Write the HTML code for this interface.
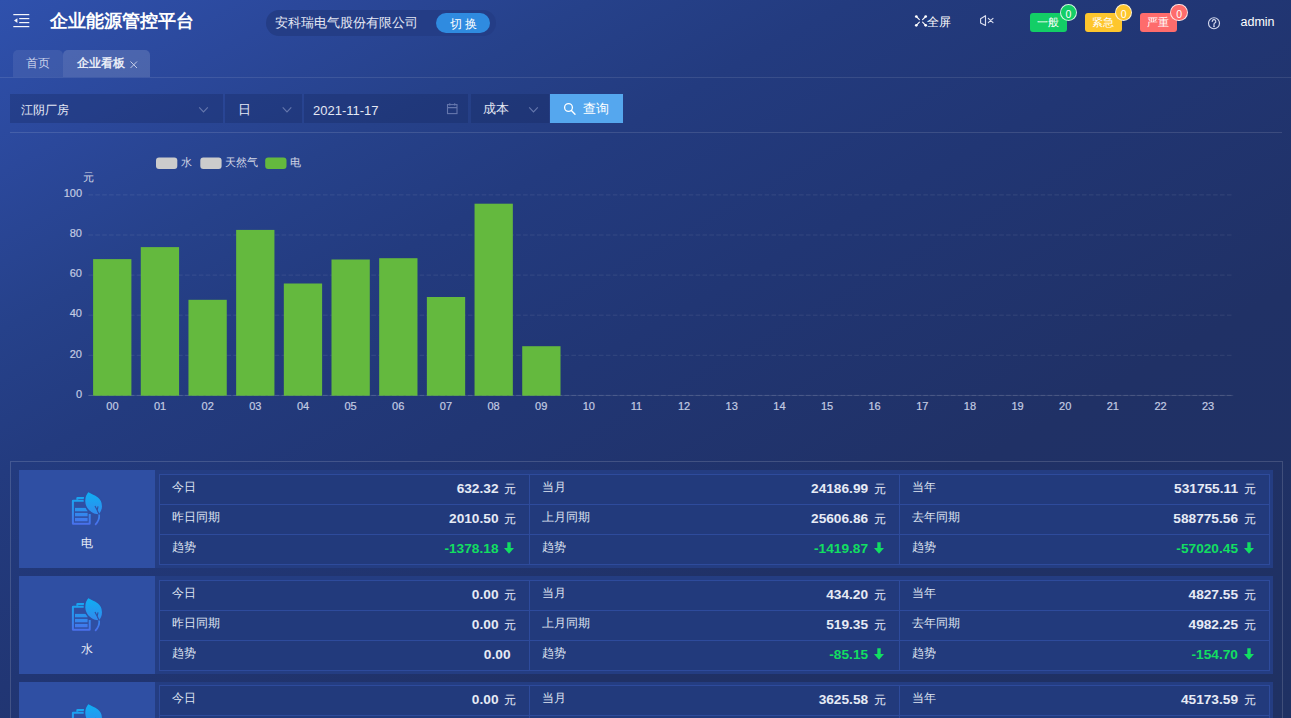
<!DOCTYPE html>
<html><head><meta charset="utf-8">
<style>
*{margin:0;padding:0;box-sizing:border-box}
html,body{width:1291px;height:718px;overflow:hidden}
body{font-family:"Liberation Sans",sans-serif;color:#fff;position:relative;
background:linear-gradient(to bottom right,#2f51ad 0%,#2b489b 12%,#26418a 23%,#233b7f 33%,#213674 48%,#203166 70%,#1f3163 100%)}
.a{position:absolute;white-space:nowrap}
.t{line-height:1}
.bdg{width:17.5px;height:17px;border-radius:9px;border:1px solid rgba(255,255,255,0.8);font-size:10.5px;line-height:19px;text-align:center;color:#fff}
.lbl{font-size:12px;line-height:12px;color:#e8ecf6}
.tbl{border:1px solid #2e4b9c;background:#223a7c}
.hl{height:1px;background:#2e4b9c}
.vl{width:1px;background:#2e4b9c}
.lab{font-size:12px;line-height:12px;color:#dfe4f1}
.val{font-size:13.7px;line-height:14px;color:#e6eaf5}
.val b{font-weight:bold}
.yuan{font-size:12px;margin-left:5.5px;font-weight:normal}
.g b{color:#12de62}
.arr{margin-left:5.5px;vertical-align:-1px}

</style></head><body>
<!-- header -->
<svg class="a" style="left:13px;top:13px" width="18" height="16" viewBox="0 0 18 16">
<g fill="#f4f6fb"><rect x="0.3" y="1" width="16" height="1.2"/><rect x="6.2" y="5" width="10.1" height="1.2"/><rect x="6.2" y="9" width="10.1" height="1.2"/><rect x="0.3" y="13" width="16" height="1.2"/><path d="M1 7.6 L4.4 5.3 L4.4 9.9Z"/></g></svg>
<div class="a t" style="left:50px;top:12px;font-size:18px;font-weight:bold">企业能源管控平台</div>
<div class="a" style="left:266px;top:10px;width:230px;height:26px;border-radius:13px;background:#243d86"></div>
<div class="a t" style="left:274.5px;top:16.5px;font-size:12.5px;color:#e4e8f4">安科瑞电气股份有限公司</div>
<div class="a" style="left:436px;top:13px;width:54px;height:20px;border-radius:10px;background:#2f8be0"></div>
<div class="a t" style="left:450px;top:17.5px;font-size:12px">切 换</div>

<svg class="a" style="left:912px;top:12px" width="18" height="18" viewBox="912 12 18 18" stroke="#fff" stroke-width="1.4" stroke-linecap="round" fill="#fff">
<path d="M916.3 16.5L919.4 19.6M925.7 16.5L922.6 19.6M916.3 25.3L919.4 22.2M925.7 25.3L922.6 22.2" stroke-width="1.1"/>
<circle cx="916.3" cy="16.5" r="1.35" stroke="none"/><circle cx="925.7" cy="16.5" r="1.35" stroke="none"/><circle cx="916.3" cy="25.3" r="1.35" stroke="none"/><circle cx="925.7" cy="25.3" r="1.35" stroke="none"/>
</svg>
<div class="a t" style="left:927px;top:16px;font-size:12px">全屏</div>
<svg class="a" style="left:976px;top:12px" width="22" height="18" viewBox="976 12 22 18" fill="none" stroke="#d9ddee" stroke-width="1.15" stroke-linejoin="round">
<path d="M980.6 18.7L985.5 15.7V25.4L980.6 23Z"/>
<path d="M988.3 18.4L993 22.7M993 18.4L988.3 22.7" stroke-linecap="round"/>
</svg>
<div class="a" style="left:1030px;top:13px;width:37px;height:19px;border-radius:3px;background:#13ce66"></div>
<div class="a" style="left:1085px;top:13px;width:37px;height:19px;border-radius:3px;background:#fec62d"></div>
<div class="a" style="left:1140px;top:13px;width:37px;height:19px;border-radius:3px;background:#fe6c6c"></div>
<div class="a t" style="left:1037px;top:16.5px;font-size:11px;width:22px;text-align:center">一般</div>
<div class="a t" style="left:1092px;top:16.5px;font-size:11px;width:22px;text-align:center">紧急</div>
<div class="a t" style="left:1147px;top:16.5px;font-size:11px;width:22px;text-align:center">严重</div>
<div class="a bdg" style="left:1059.6px;top:3.7px;background:#13ce66">0</div>
<div class="a bdg" style="left:1114.9px;top:3.7px;background:#fec62d">0</div>
<div class="a bdg" style="left:1170.3px;top:3.7px;background:#fe6c6c">0</div>
<svg class="a" style="left:1204px;top:13px" width="20" height="20" viewBox="1204 13 20 20" fill="none" stroke="#d3d8ec" stroke-width="1.15">
<circle cx="1214" cy="23.2" r="5.5"/>
<path d="M1212.2 21.4a1.8 1.8 0 1 1 2.6 1.6c-0.5 0.3-0.8 0.7-0.8 1.3v0.6" stroke-linecap="round"/>
<circle cx="1214" cy="26.3" r="0.35" fill="#d3d8ec"/>
</svg>
<div class="a t" style="left:1240.5px;top:16px;font-size:12.5px">admin</div>

<!-- tabs -->
<div class="a" style="left:0;top:77px;width:1291px;height:1px;background:rgba(255,255,255,0.1)"></div>
<div class="a" style="left:13px;top:50px;width:50px;height:27px;border-radius:5px 5px 0 0;background:rgba(255,255,255,0.08)"></div>
<div class="a" style="left:63px;top:50px;width:87px;height:27px;border-radius:5px 5px 0 0;background:rgba(255,255,255,0.15)"></div>
<div class="a t" style="left:26px;top:57px;font-size:12px;color:#c9d1ea">首页</div>
<div class="a t" style="left:77px;top:57px;font-size:12px;font-weight:bold;color:#e8ecf6">企业看板</div>
<svg class="a" style="left:128px;top:59px" width="12" height="12" viewBox="128 59 12 12" stroke="#c4cce6" stroke-width="1" fill="none"><path d="M130.5 61.5L137 68M137 61.5L130.5 68"/></svg>

<!-- filter -->
<div class="a" style="left:10px;top:94px;width:213px;height:29px;background:rgba(20,35,90,0.3)"></div>
<div class="a" style="left:225px;top:94px;width:77px;height:29px;background:rgba(20,35,90,0.3)"></div>
<div class="a" style="left:304px;top:94px;width:164px;height:29px;background:rgba(20,35,90,0.3)"></div>
<div class="a" style="left:471px;top:94px;width:78px;height:29px;background:rgba(20,35,90,0.3)"></div>
<div class="a" style="left:550px;top:94px;width:73px;height:29px;background:#55a7ee"></div>
<div class="a t" style="left:21px;top:103.5px;font-size:12px;color:#e4e8f4">江阴厂房</div>
<div class="a t" style="left:238px;top:103.5px;font-size:12.5px;color:#e4e8f4">日</div>
<div class="a t" style="left:313px;top:103.5px;font-size:13px;color:#e4e8f4">2021-11-17</div>
<div class="a t" style="left:483px;top:103px;font-size:12.5px;color:#e4e8f4">成本</div>
<div class="a t" style="left:583px;top:103px;font-size:12.5px;color:#fff">查询</div>
<svg class="a" style="left:0;top:95px" width="650" height="28" viewBox="0 95 650 28" fill="none" stroke="#6577ad" stroke-width="1.1">
<path d="M199.2 107.4L203.5 112L207.8 107.4"/>
<path d="M282.7 107.4L287 112L291.3 107.4"/>
<path d="M529.2 107.4L533.5 112L537.8 107.4"/>
<rect x="447.5" y="104.6" width="9.5" height="9" />
<path d="M447.5 107.6H457M449.8 103.2V105.5M454.7 103.2V105.5"/>
<circle cx="568.5" cy="107.5" r="3.9" stroke="#fff" stroke-width="1.3"/>
<path d="M571.4 110.6L575 114.2" stroke="#fff" stroke-width="1.4" stroke-linecap="round"/>
</svg>
<div class="a" style="left:10px;top:132px;width:1272px;height:1px;background:rgba(255,255,255,0.12)"></div>

<!-- chart -->
<svg class="a" style="left:0;top:140px" width="1291" height="290" viewBox="0 140 1291 290" font-family="Liberation Sans" font-size="11" fill="#c3cbe2" stroke="#c3cbe2" stroke-width="0.2">
<g stroke="none">
<rect x="156" y="157.5" width="21.3" height="11.5" rx="3" fill="#cccccc"/>
<rect x="200.3" y="157.5" width="21.3" height="11.5" rx="3" fill="#cccccc"/>
<rect x="265.2" y="157.5" width="21.3" height="11.5" rx="3" fill="#64b93e" stroke="none"/>
</g>
<text x="181" y="166" font-size="10.5" stroke="none" fill="#d4d8e6">水</text>
<text x="225.3" y="166" font-size="10.5" stroke="none" fill="#d4d8e6">天然气</text>
<text x="290.3" y="166" font-size="10.5" stroke="none" fill="#d4d8e6">电</text>
<text x="83" y="180.5" font-size="11" stroke="none" fill="#d4d8e6">元</text>
<line x1="88.4" y1="194.9" x2="1233.3" y2="194.9" stroke="rgba(255,255,255,0.09)" stroke-width="1" stroke-dasharray="4.6 2.3"/>
<line x1="88.4" y1="235.0" x2="1233.3" y2="235.0" stroke="rgba(255,255,255,0.09)" stroke-width="1" stroke-dasharray="4.6 2.3"/>
<line x1="88.4" y1="275.1" x2="1233.3" y2="275.1" stroke="rgba(255,255,255,0.09)" stroke-width="1" stroke-dasharray="4.6 2.3"/>
<line x1="88.4" y1="315.2" x2="1233.3" y2="315.2" stroke="rgba(255,255,255,0.09)" stroke-width="1" stroke-dasharray="4.6 2.3"/>
<line x1="88.4" y1="355.3" x2="1233.3" y2="355.3" stroke="rgba(255,255,255,0.09)" stroke-width="1" stroke-dasharray="4.6 2.3"/>
<line x1="88.4" y1="395.4" x2="1233.3" y2="395.4" stroke="rgba(255,255,255,0.1)" stroke-width="1"/>
<line x1="88.4" y1="395.4" x2="1233.3" y2="395.4" stroke="rgba(255,255,255,0.12)" stroke-width="1" stroke-dasharray="4.6 2.3"/>
<rect x="93.10" y="259.1" width="38.3" height="136.6" fill="#64b93e" stroke="none"/>
<rect x="140.78" y="247.1" width="38.3" height="148.6" fill="#64b93e" stroke="none"/>
<rect x="188.46" y="299.8" width="38.3" height="95.9" fill="#64b93e" stroke="none"/>
<rect x="236.14" y="229.9" width="38.3" height="165.8" fill="#64b93e" stroke="none"/>
<rect x="283.82" y="283.5" width="38.3" height="112.2" fill="#64b93e" stroke="none"/>
<rect x="331.50" y="259.5" width="38.3" height="136.2" fill="#64b93e" stroke="none"/>
<rect x="379.18" y="258.2" width="38.3" height="137.5" fill="#64b93e" stroke="none"/>
<rect x="426.86" y="297.0" width="38.3" height="98.7" fill="#64b93e" stroke="none"/>
<rect x="474.54" y="203.7" width="38.3" height="192.0" fill="#64b93e" stroke="none"/>
<rect x="522.22" y="346.2" width="38.3" height="49.5" fill="#64b93e" stroke="none"/>
<text x="82" y="197.1" text-anchor="end">100</text>
<text x="82" y="237.2" text-anchor="end">80</text>
<text x="82" y="277.3" text-anchor="end">60</text>
<text x="82" y="317.4" text-anchor="end">40</text>
<text x="82" y="357.5" text-anchor="end">20</text>
<text x="82" y="397.6" text-anchor="end">0</text>
<text x="112.4" y="410" text-anchor="middle">00</text>
<text x="160.0" y="410" text-anchor="middle">01</text>
<text x="207.7" y="410" text-anchor="middle">02</text>
<text x="255.3" y="410" text-anchor="middle">03</text>
<text x="303.0" y="410" text-anchor="middle">04</text>
<text x="350.6" y="410" text-anchor="middle">05</text>
<text x="398.2" y="410" text-anchor="middle">06</text>
<text x="445.9" y="410" text-anchor="middle">07</text>
<text x="493.5" y="410" text-anchor="middle">08</text>
<text x="541.2" y="410" text-anchor="middle">09</text>
<text x="588.8" y="410" text-anchor="middle">10</text>
<text x="636.4" y="410" text-anchor="middle">11</text>
<text x="684.1" y="410" text-anchor="middle">12</text>
<text x="731.7" y="410" text-anchor="middle">13</text>
<text x="779.4" y="410" text-anchor="middle">14</text>
<text x="827.0" y="410" text-anchor="middle">15</text>
<text x="874.6" y="410" text-anchor="middle">16</text>
<text x="922.3" y="410" text-anchor="middle">17</text>
<text x="969.9" y="410" text-anchor="middle">18</text>
<text x="1017.6" y="410" text-anchor="middle">19</text>
<text x="1065.2" y="410" text-anchor="middle">20</text>
<text x="1112.8" y="410" text-anchor="middle">21</text>
<text x="1160.5" y="410" text-anchor="middle">22</text>
<text x="1208.1" y="410" text-anchor="middle">23</text>

</svg>

<!-- bottom panel -->
<div class="a" style="left:9.5px;top:461px;width:1273px;height:300px;border:1px solid rgba(255,255,255,0.15)"></div>
<!--CARDS-->
<div class="a" style="left:19px;top:470px;width:1254px;height:98px;background:#243d82"></div>
<div class="a" style="left:19px;top:470px;width:136px;height:98px;background:#2f4fa3"></div>
<svg class="a" style="left:70px;top:490px" width="36" height="36" viewBox="0 0 36 36"><defs><linearGradient id="ig" x1="0" y1="0" x2="0" y2="36" gradientUnits="userSpaceOnUse"><stop offset="0" stop-color="#0cb2f4"/><stop offset="0.55" stop-color="#2a92ee"/><stop offset="1" stop-color="#4d6cec"/></linearGradient></defs>
<g fill="url(#ig)" stroke="none">
<path d="M6.3 9.7V8.2a1.3 1.3 0 0 1 1.3-1.3H15.5V8.9H8.3V9.7Z"/>
<path d="M3.9 9.7H15V11.7H3.9V32.8H18.7V24H20.7V33.5a1.3 1.3 0 0 1-1.3 1.3H3.2a1.3 1.3 0 0 1-1.3-1.3V11a1.3 1.3 0 0 1 1.3-1.3Z"/>
<rect x="5" y="17.9" width="12.6" height="3.4"/>
<rect x="5" y="22.9" width="12.6" height="3.4"/>
<rect x="5" y="27.9" width="12.6" height="3.4"/>
</g>
<path d="M18.2 1.2C13 6.5 13.2 16 19 21C22.5 24 26.5 25.2 29.3 25C33.5 20.5 34.8 12 28 6.5C25 4.2 20.5 3 18.2 1.2Z" fill="url(#ig)" stroke="#2f4fa3" stroke-width="1.6"/>
<path d="M25 16L27.2 20.2L29 24.2M28 16.4L27.2 20.2" stroke="#2f4fa3" stroke-width="1.1" fill="none"/>
<path d="M29.2 24.5C29.6 29 28 32 25.2 34.8" stroke="url(#ig)" stroke-width="1.7" fill="none"/>
</svg>
<div class="a lbl" style="left:19px;width:136px;text-align:center;top:537px">电</div>
<div class="a tbl" style="left:159px;top:474px;width:1111px;height:91px"></div>
<div class="a hl" style="left:160px;top:504px;width:1109px"></div>
<div class="a hl" style="left:160px;top:534px;width:1109px"></div>
<div class="a vl" style="left:529px;top:475px;height:89px"></div>
<div class="a vl" style="left:899px;top:475px;height:89px"></div>
<div class="a lab" style="left:171.8px;top:481px">今日</div>
<div class="a val" style="right:775.0px;top:481.5px"><b>632.32</b><span class="yuan">元</span></div>
<div class="a lab" style="left:542.3px;top:481px">当月</div>
<div class="a val" style="right:405.4px;top:481.5px"><b>24186.99</b><span class="yuan">元</span></div>
<div class="a lab" style="left:911.9px;top:481px">当年</div>
<div class="a val" style="right:35.5px;top:481.5px"><b>531755.11</b><span class="yuan">元</span></div>
<div class="a lab" style="left:171.8px;top:511px">昨日同期</div>
<div class="a val" style="right:775.0px;top:511.5px"><b>2010.50</b><span class="yuan">元</span></div>
<div class="a lab" style="left:542.3px;top:511px">上月同期</div>
<div class="a val" style="right:405.4px;top:511.5px"><b>25606.86</b><span class="yuan">元</span></div>
<div class="a lab" style="left:911.9px;top:511px">去年同期</div>
<div class="a val" style="right:35.5px;top:511.5px"><b>588775.56</b><span class="yuan">元</span></div>
<div class="a lab" style="left:171.8px;top:541px">趋势</div>
<div class="a val g" style="right:777.0px;top:541.5px"><b>-1378.18</b><svg class="arr" width="10" height="12" viewBox="0 0 10 12"><path d="M3.3 0.3H6.7V5.9H10L5 11.8L0 5.9H3.3Z" fill="#12de62"/></svg></div>
<div class="a lab" style="left:542.3px;top:541px">趋势</div>
<div class="a val g" style="right:407.4px;top:541.5px"><b>-1419.87</b><svg class="arr" width="10" height="12" viewBox="0 0 10 12"><path d="M3.3 0.3H6.7V5.9H10L5 11.8L0 5.9H3.3Z" fill="#12de62"/></svg></div>
<div class="a lab" style="left:911.9px;top:541px">趋势</div>
<div class="a val g" style="right:37.5px;top:541.5px"><b>-57020.45</b><svg class="arr" width="10" height="12" viewBox="0 0 10 12"><path d="M3.3 0.3H6.7V5.9H10L5 11.8L0 5.9H3.3Z" fill="#12de62"/></svg></div>
<div class="a" style="left:19px;top:576px;width:1254px;height:98px;background:#243d82"></div>
<div class="a" style="left:19px;top:576px;width:136px;height:98px;background:#2f4fa3"></div>
<svg class="a" style="left:70px;top:596px" width="36" height="36" viewBox="0 0 36 36"><defs><linearGradient id="ig" x1="0" y1="0" x2="0" y2="36" gradientUnits="userSpaceOnUse"><stop offset="0" stop-color="#0cb2f4"/><stop offset="0.55" stop-color="#2a92ee"/><stop offset="1" stop-color="#4d6cec"/></linearGradient></defs>
<g fill="url(#ig)" stroke="none">
<path d="M6.3 9.7V8.2a1.3 1.3 0 0 1 1.3-1.3H15.5V8.9H8.3V9.7Z"/>
<path d="M3.9 9.7H15V11.7H3.9V32.8H18.7V24H20.7V33.5a1.3 1.3 0 0 1-1.3 1.3H3.2a1.3 1.3 0 0 1-1.3-1.3V11a1.3 1.3 0 0 1 1.3-1.3Z"/>
<rect x="5" y="17.9" width="12.6" height="3.4"/>
<rect x="5" y="22.9" width="12.6" height="3.4"/>
<rect x="5" y="27.9" width="12.6" height="3.4"/>
</g>
<path d="M18.2 1.2C13 6.5 13.2 16 19 21C22.5 24 26.5 25.2 29.3 25C33.5 20.5 34.8 12 28 6.5C25 4.2 20.5 3 18.2 1.2Z" fill="url(#ig)" stroke="#2f4fa3" stroke-width="1.6"/>
<path d="M25 16L27.2 20.2L29 24.2M28 16.4L27.2 20.2" stroke="#2f4fa3" stroke-width="1.1" fill="none"/>
<path d="M29.2 24.5C29.6 29 28 32 25.2 34.8" stroke="url(#ig)" stroke-width="1.7" fill="none"/>
</svg>
<div class="a lbl" style="left:19px;width:136px;text-align:center;top:643px">水</div>
<div class="a tbl" style="left:159px;top:580px;width:1111px;height:91px"></div>
<div class="a hl" style="left:160px;top:610px;width:1109px"></div>
<div class="a hl" style="left:160px;top:640px;width:1109px"></div>
<div class="a vl" style="left:529px;top:581px;height:89px"></div>
<div class="a vl" style="left:899px;top:581px;height:89px"></div>
<div class="a lab" style="left:171.8px;top:587px">今日</div>
<div class="a val" style="right:775.0px;top:587.5px"><b>0.00</b><span class="yuan">元</span></div>
<div class="a lab" style="left:542.3px;top:587px">当月</div>
<div class="a val" style="right:405.4px;top:587.5px"><b>434.20</b><span class="yuan">元</span></div>
<div class="a lab" style="left:911.9px;top:587px">当年</div>
<div class="a val" style="right:35.5px;top:587.5px"><b>4827.55</b><span class="yuan">元</span></div>
<div class="a lab" style="left:171.8px;top:617px">昨日同期</div>
<div class="a val" style="right:775.0px;top:617.5px"><b>0.00</b><span class="yuan">元</span></div>
<div class="a lab" style="left:542.3px;top:617px">上月同期</div>
<div class="a val" style="right:405.4px;top:617.5px"><b>519.35</b><span class="yuan">元</span></div>
<div class="a lab" style="left:911.9px;top:617px">去年同期</div>
<div class="a val" style="right:35.5px;top:617.5px"><b>4982.25</b><span class="yuan">元</span></div>
<div class="a lab" style="left:171.8px;top:647px">趋势</div>
<div class="a val" style="right:780.5px;top:647.5px"><b>0.00</b></div>
<div class="a lab" style="left:542.3px;top:647px">趋势</div>
<div class="a val g" style="right:407.4px;top:647.5px"><b>-85.15</b><svg class="arr" width="10" height="12" viewBox="0 0 10 12"><path d="M3.3 0.3H6.7V5.9H10L5 11.8L0 5.9H3.3Z" fill="#12de62"/></svg></div>
<div class="a lab" style="left:911.9px;top:647px">趋势</div>
<div class="a val g" style="right:37.5px;top:647.5px"><b>-154.70</b><svg class="arr" width="10" height="12" viewBox="0 0 10 12"><path d="M3.3 0.3H6.7V5.9H10L5 11.8L0 5.9H3.3Z" fill="#12de62"/></svg></div>
<div class="a" style="left:19px;top:682px;width:1254px;height:98px;background:#243d82"></div>
<div class="a" style="left:19px;top:682px;width:136px;height:98px;background:#2f4fa3"></div>
<svg class="a" style="left:70px;top:702px" width="36" height="36" viewBox="0 0 36 36"><defs><linearGradient id="ig" x1="0" y1="0" x2="0" y2="36" gradientUnits="userSpaceOnUse"><stop offset="0" stop-color="#0cb2f4"/><stop offset="0.55" stop-color="#2a92ee"/><stop offset="1" stop-color="#4d6cec"/></linearGradient></defs>
<g fill="url(#ig)" stroke="none">
<path d="M6.3 9.7V8.2a1.3 1.3 0 0 1 1.3-1.3H15.5V8.9H8.3V9.7Z"/>
<path d="M3.9 9.7H15V11.7H3.9V32.8H18.7V24H20.7V33.5a1.3 1.3 0 0 1-1.3 1.3H3.2a1.3 1.3 0 0 1-1.3-1.3V11a1.3 1.3 0 0 1 1.3-1.3Z"/>
<rect x="5" y="17.9" width="12.6" height="3.4"/>
<rect x="5" y="22.9" width="12.6" height="3.4"/>
<rect x="5" y="27.9" width="12.6" height="3.4"/>
</g>
<path d="M18.2 1.2C13 6.5 13.2 16 19 21C22.5 24 26.5 25.2 29.3 25C33.5 20.5 34.8 12 28 6.5C25 4.2 20.5 3 18.2 1.2Z" fill="url(#ig)" stroke="#2f4fa3" stroke-width="1.6"/>
<path d="M25 16L27.2 20.2L29 24.2M28 16.4L27.2 20.2" stroke="#2f4fa3" stroke-width="1.1" fill="none"/>
<path d="M29.2 24.5C29.6 29 28 32 25.2 34.8" stroke="url(#ig)" stroke-width="1.7" fill="none"/>
</svg>
<div class="a lbl" style="left:19px;width:136px;text-align:center;top:749px">气</div>
<div class="a tbl" style="left:159px;top:685px;width:1111px;height:91px"></div>
<div class="a hl" style="left:160px;top:715px;width:1109px"></div>
<div class="a hl" style="left:160px;top:745px;width:1109px"></div>
<div class="a vl" style="left:529px;top:686px;height:89px"></div>
<div class="a vl" style="left:899px;top:686px;height:89px"></div>
<div class="a lab" style="left:171.8px;top:692px">今日</div>
<div class="a val" style="right:775.0px;top:692.5px"><b>0.00</b><span class="yuan">元</span></div>
<div class="a lab" style="left:542.3px;top:692px">当月</div>
<div class="a val" style="right:405.4px;top:692.5px"><b>3625.58</b><span class="yuan">元</span></div>
<div class="a lab" style="left:911.9px;top:692px">当年</div>
<div class="a val" style="right:35.5px;top:692.5px"><b>45173.59</b><span class="yuan">元</span></div>
<div class="a lab" style="left:171.8px;top:722px">昨日同期</div>
<div class="a val" style="right:775.0px;top:722.5px"><b>0.00</b><span class="yuan">元</span></div>
<div class="a lab" style="left:542.3px;top:722px">上月同期</div>
<div class="a val" style="right:405.4px;top:722.5px"><b>0.00</b><span class="yuan">元</span></div>
<div class="a lab" style="left:911.9px;top:722px">去年同期</div>
<div class="a val" style="right:35.5px;top:722.5px"><b>0.00</b><span class="yuan">元</span></div>
<div class="a lab" style="left:171.8px;top:752px">趋势</div>
<div class="a val" style="right:780.5px;top:752.5px"><b>0.00</b></div>
<div class="a lab" style="left:542.3px;top:752px">趋势</div>
<div class="a val" style="right:410.9px;top:752.5px"><b>0.00</b></div>
<div class="a lab" style="left:911.9px;top:752px">趋势</div>
<div class="a val" style="right:41.0px;top:752.5px"><b>0.00</b></div>

<!--/CARDS-->
</body></html>
